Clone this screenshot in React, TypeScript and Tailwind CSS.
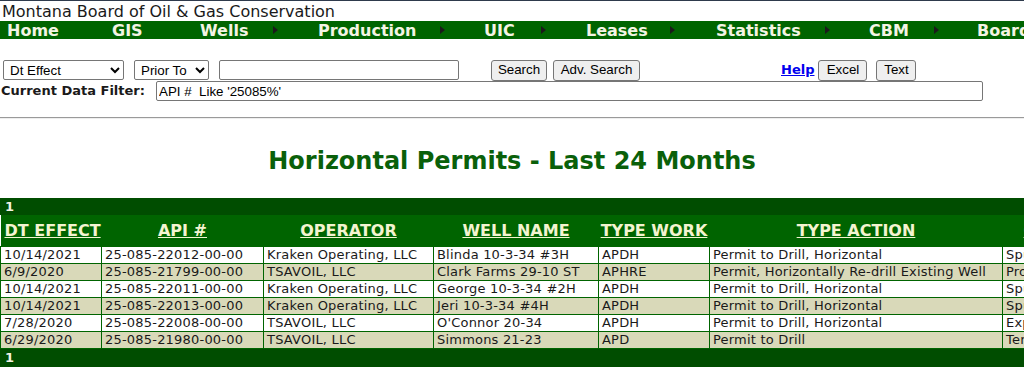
import React from 'react'

const nav = [
  { label: 'Home', cell: 105, text: 0, arrow: false },
  { label: 'GIS', cell: 88, text: 0, arrow: false },
  { label: 'Wells', cell: 118, text: 73, arrow: true },
  { label: 'Production', cell: 166, text: 122, arrow: true },
  { label: 'UIC', cell: 102, text: 57, arrow: true },
  { label: 'Leases', cell: 130, text: 84, arrow: true },
  { label: 'Statistics', cell: 153, text: 109, arrow: true },
  { label: 'CBM', cell: 108, text: 65, arrow: true },
  { label: 'Board', cell: 120, text: 0, arrow: false },
]

const cols = [
  { head: 'DT EFFECT', w: 101 },
  { head: 'API #', w: 162 },
  { head: 'OPERATOR', w: 170 },
  { head: 'WELL NAME', w: 165 },
  { head: 'TYPE WORK', w: 111 },
  { head: 'TYPE ACTION', w: 293 },
  { head: 'CURRENT STATUS', w: 200 },
]

const rows = [
  ['10/14/2021', '25-085-22012-00-00', 'Kraken Operating, LLC', 'Blinda 10-3-34 #3H', 'APDH', 'Permit to Drill, Horizontal', 'Spud'],
  ['6/9/2020', '25-085-21799-00-00', 'TSAVOIL, LLC', 'Clark Farms 29-10 ST', 'APHRE', 'Permit, Horizontally Re-drill Existing Well', 'Producing'],
  ['10/14/2021', '25-085-22011-00-00', 'Kraken Operating, LLC', 'George 10-3-34 #2H', 'APDH', 'Permit to Drill, Horizontal', 'Spud'],
  ['10/14/2021', '25-085-22013-00-00', 'Kraken Operating, LLC', 'Jeri 10-3-34 #4H', 'APDH', 'Permit to Drill, Horizontal', 'Spud'],
  ['7/28/2020', '25-085-22008-00-00', 'TSAVOIL, LLC', "O'Connor 20-34", 'APDH', 'Permit to Drill, Horizontal', 'Expired'],
  ['6/29/2020', '25-085-21980-00-00', 'TSAVOIL, LLC', 'Simmons 21-23', 'APD', 'Permit to Drill', 'Temporarily Abandoned'],
]

function Arrow() {
  return (
    <svg width="5" height="8" viewBox="0 0 5 8" className="shrink-0">
      <path d="M0 0 L5 4 L0 8 Z" fill="#1a1a1a" />
    </svg>
  )
}

function Btn({ children, w }: { children: React.ReactNode; w: string }) {
  return (
    <button
      className={`${w} h-[21px] rounded-[3px] border border-[#767676] bg-[#efefef] text-[13.33px] leading-none text-black`}
      style={{ fontFamily: '"Liberation Sans", Arial, sans-serif' }}
    >
      {children}
    </button>
  )
}

export default function App() {
  return (
    <div className="h-[373px] w-[1024px] overflow-hidden border-t border-[#2e3a4c] bg-white font-['DejaVu_Sans',Verdana,sans-serif]">
      <div className="h-[20px] pl-[2px] text-[16px] leading-[22px] text-[#1a1a1a]">
        Montana Board of Oil &amp; Gas Conservation
      </div>

      <div className="flex h-[18px] whitespace-nowrap bg-[#006400] text-[16px] font-bold leading-[19px] text-[#f4f4e4]">
        {nav.map((n) => (
          <div key={n.label} className="flex shrink-0 items-center pl-[7px]" style={{ width: n.cell }}>
            {n.arrow ? (
              <>
                <span className="shrink-0" style={{ width: n.text }}>{n.label}</span>
                <Arrow />
              </>
            ) : (
              <span>{n.label}</span>
            )}
          </div>
        ))}
      </div>

      <div className="pt-[21px] font-['Liberation_Sans',Arial,sans-serif] text-[13.33px]">
        <div className="flex h-[20px] items-center">
          <select className="ml-[3px] h-[20px] w-[121px] rounded-[2px] border border-[#767676] bg-white pl-[2px] text-[13.33px]">
            <option>Dt Effect</option>
          </select>
          <select className="ml-[10px] h-[20px] w-[75px] rounded-[2px] border border-[#767676] bg-white pl-[2px] text-[13.33px]">
            <option>Prior To</option>
          </select>
          <input className="ml-[10px] h-[20px] w-[240px] rounded-[2px] border border-[#767676] bg-white" />
          <div className="ml-[32px]">
            <Btn w="w-[56px]">Search</Btn>
          </div>
          <div className="ml-[6px]">
            <Btn w="w-[87px]">Adv. Search</Btn>
          </div>
          <a className="ml-[141px] font-['DejaVu_Sans',Verdana,sans-serif] text-[13px] font-bold text-[#0000ee] underline">
            Help
          </a>
          <div className="ml-[4px]">
            <Btn w="w-[49px]">Excel</Btn>
          </div>
          <div className="ml-[9px]">
            <Btn w="w-[40px]">Text</Btn>
          </div>
        </div>
        <div className="mt-[1px] flex h-[20px] items-center">
          <span className="w-[156px] pl-[1px] font-['DejaVu_Sans',Verdana,sans-serif] text-[13px] font-bold text-[#1a1a1a]">
            Current Data Filter:
          </span>
          <input
            readOnly
            value="API #  Like '25085%'"
            className="h-[20px] w-[827px] rounded-[2px] border border-[#767676] bg-white pl-[2px] text-[13.33px] text-black"
          />
        </div>
      </div>

      <hr className="mt-[16px] border-t border-b border-t-[#9a9a9a] border-b-[#eeeeee]" />

      <h1 className="mt-[28px] text-center text-[24px] font-bold leading-[28px] text-[#0a600a]">
        Horizontal Permits - Last 24 Months
      </h1>

      <table className="mt-[23px] w-[1202px] table-fixed border-collapse text-[13px] tracking-[0.2px]">
        <colgroup>
          {cols.map((c) => (
            <col key={c.head} style={{ width: c.w }} />
          ))}
        </colgroup>
        <thead>
          <tr className="h-[16px] bg-[#004d00]">
            <td colSpan={7} className="border border-[#004d00] pl-[4px] text-[13px] font-bold leading-[15px] text-[#f4f4e4]">
              1
            </td>
          </tr>
          <tr className="h-[32px] bg-[#006400]">
            {cols.map((c) => (
              <th
                key={c.head}
                className="border-0 p-0 text-center text-[16px] font-bold leading-[31px] tracking-normal text-[#f4f4d0] underline first:text-left first:pl-[4px]"
              >
                {c.head}
              </th>
            ))}
          </tr>
        </thead>
        <tbody>
          {rows.map((r, i) => (
            <tr key={i} className={i % 2 ? 'h-[17px] bg-[#d9d9b9]' : 'h-[17px] bg-white'}>
              {r.map((v, j) => (
                <td
                  key={j}
                  className="overflow-hidden whitespace-nowrap border border-[#006400] py-0 pl-[3px] leading-[16px] text-[#1a1a1a]"
                >
                  {v}
                </td>
              ))}
            </tr>
          ))}
          <tr className="h-[18px] bg-[#004d00]">
            <td colSpan={7} className="border border-[#004d00] pl-[4px] text-[13px] font-bold leading-[17px] text-[#f4f4e4]">
              1
            </td>
          </tr>
        </tbody>
      </table>
    </div>
  )
}
